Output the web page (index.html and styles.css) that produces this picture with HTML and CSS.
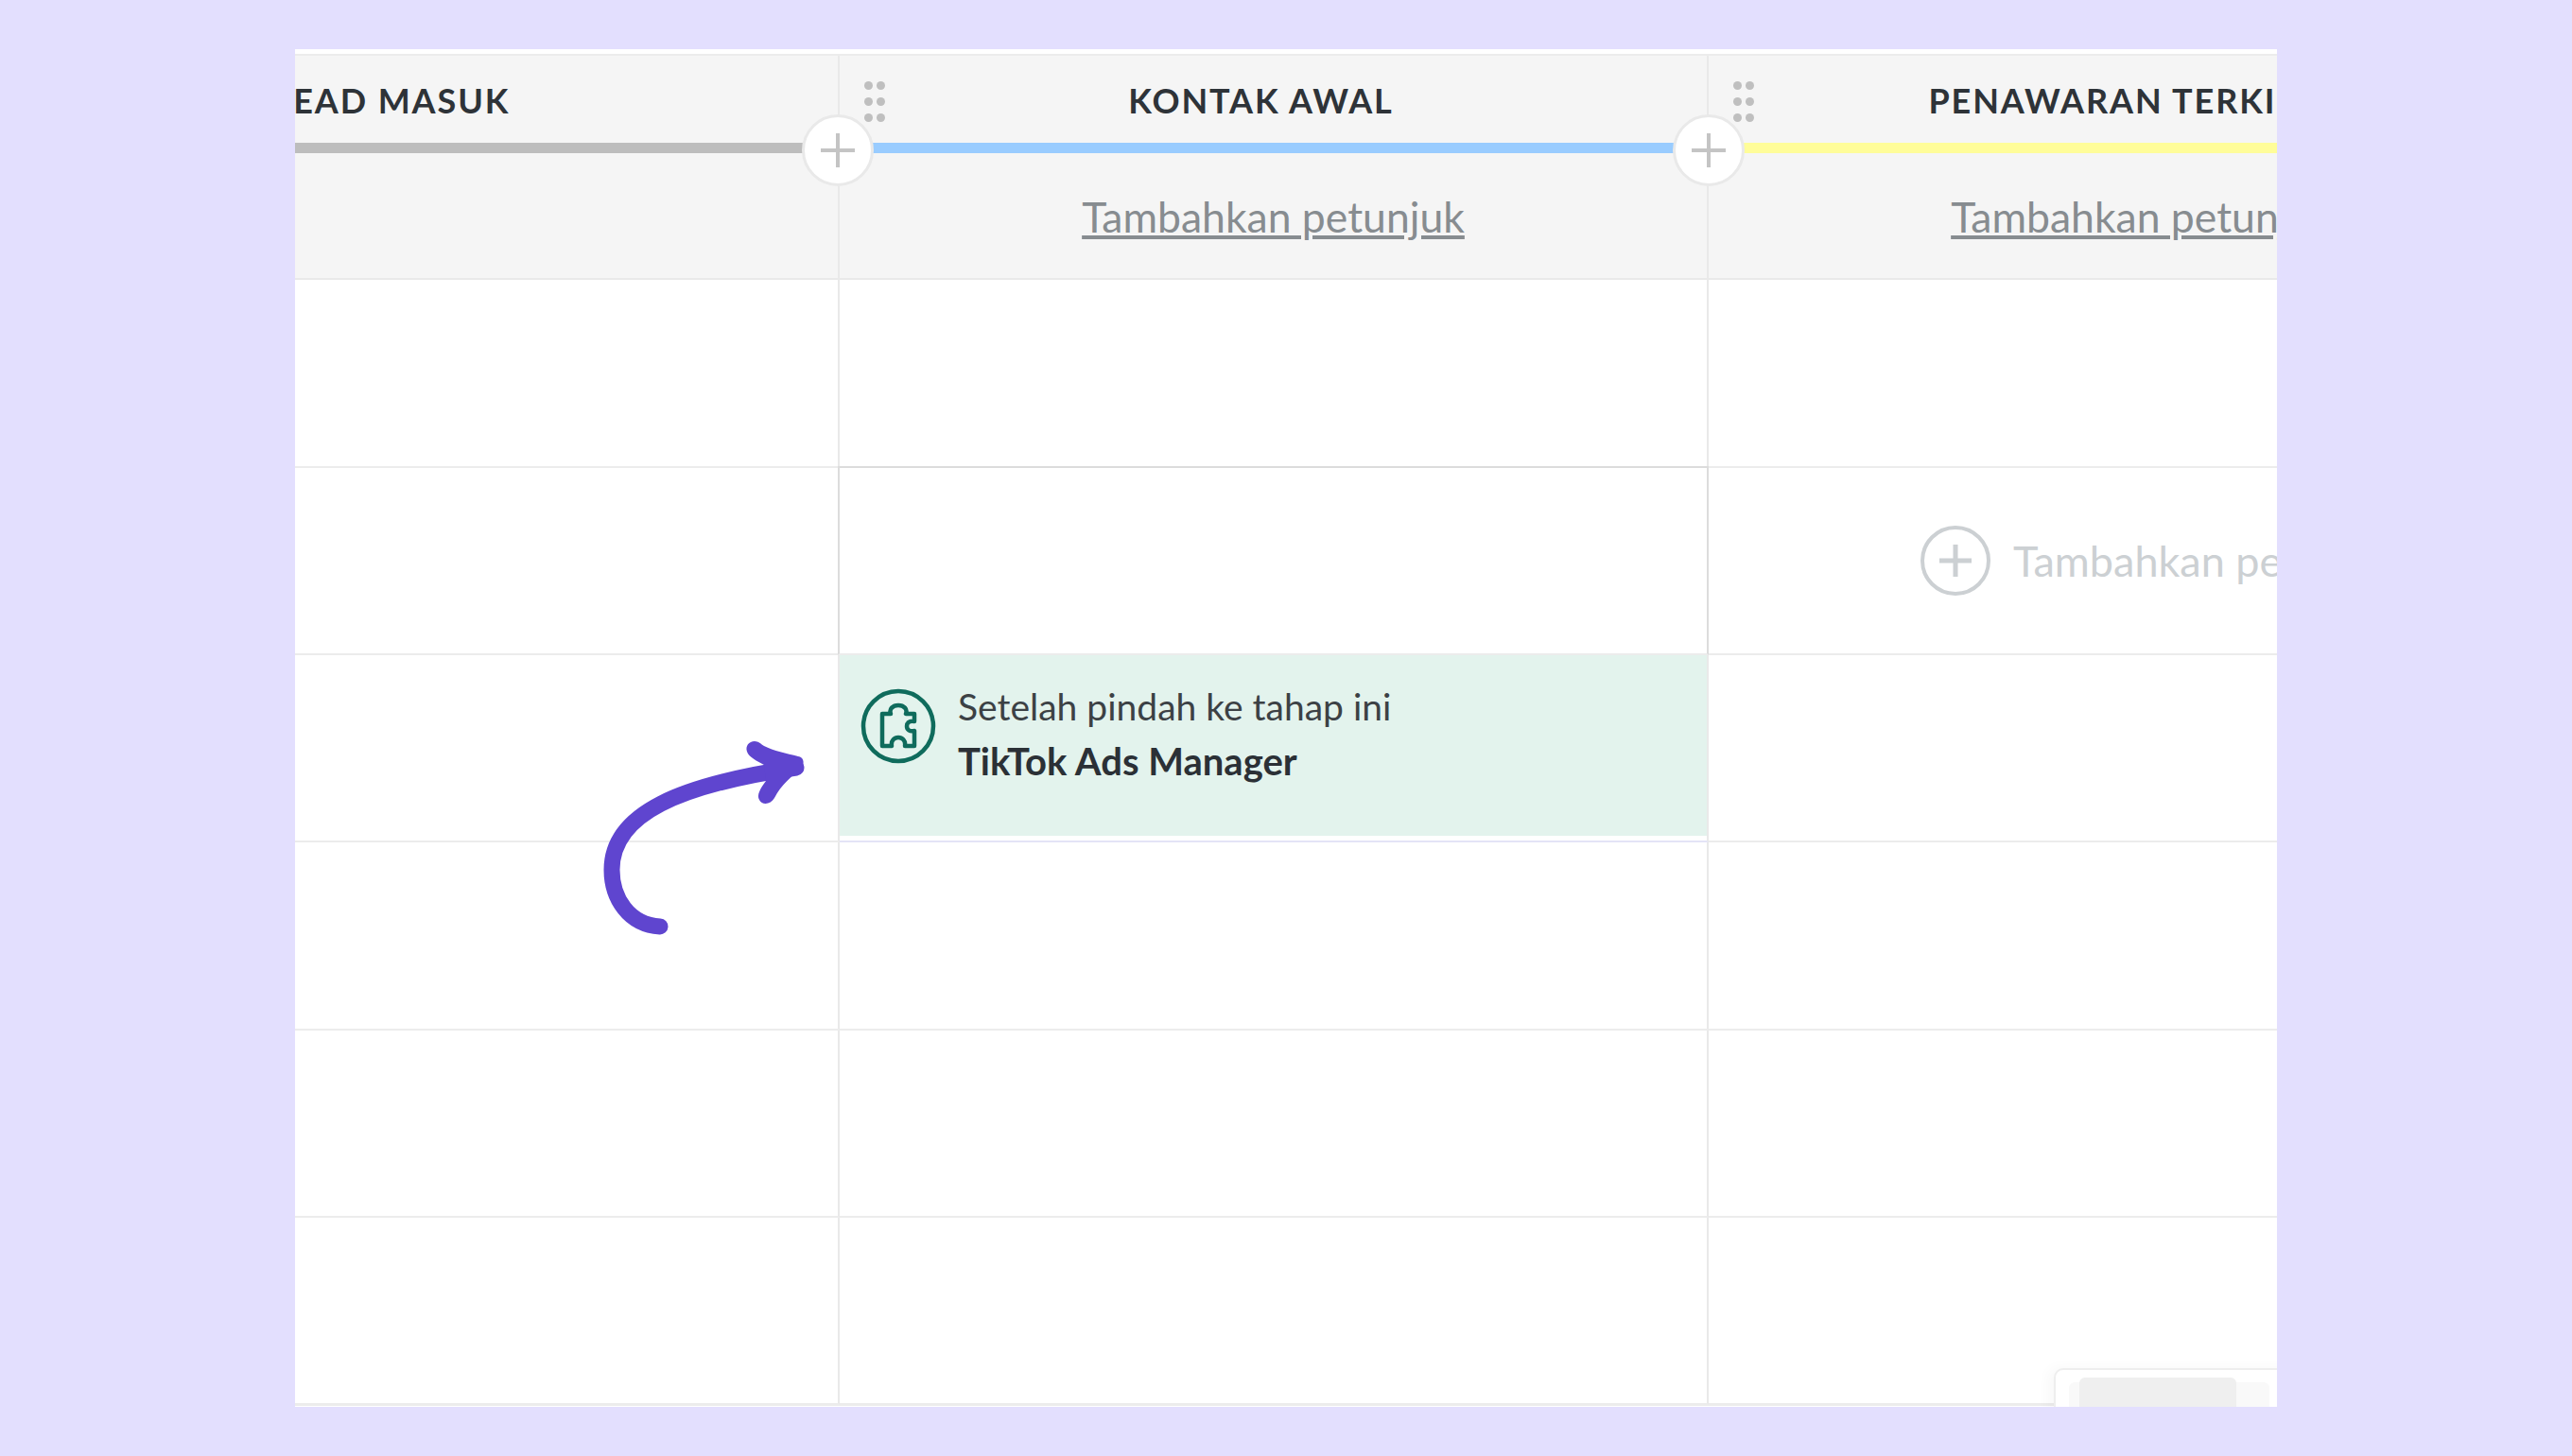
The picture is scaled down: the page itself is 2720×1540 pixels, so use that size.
FILE: index.html
```html
<!DOCTYPE html>
<html lang="id">
<head>
    <meta charset="UTF-8">
    <title>Tahapan</title>
    <link rel="stylesheet" href="styles.css">
</head>
<body>
<div class="board">
    <div class="board-inner">
        <div class="col-head">
            <div class="col-title">LEAD MASUK</div>
            <div class="col-bar bar-gray"></div>
            <div class="col-hint"></div>
            <button class="add-stage"><svg viewBox="0 0 36 36"><path d="M18 0V36M0 18H36"/></svg></button>
        </div>
        <div class="col-head">
            <div class="grip"><i></i><i></i><i></i><i></i><i></i><i></i></div>
            <div class="col-title">KONTAK AWAL</div>
            <div class="col-bar bar-blue"></div>
            <div class="col-hint"><a href="#">Tambahkan petunjuk</a></div>
            <button class="add-stage add-stage-next"><svg viewBox="0 0 36 36"><path d="M18 0V36M0 18H36"/></svg></button>
        </div>
        <div class="col-head">
            <div class="grip"><i></i><i></i><i></i><i></i><i></i><i></i></div>
            <div class="col-title col-title-wide">PENAWARAN TERKINI</div>
            <div class="col-bar bar-yellow"></div>
            <div class="col-hint"><a href="#">Tambahkan petunjuk</a></div>
        </div>

        <div class="cell"></div>
        <div class="cell"></div>
        <div class="cell"></div>

        <div class="cell"></div>
        <div class="cell cell-hover"></div>
        <div class="cell">
            <div class="add-hint">
                <svg class="add-hint-icon" viewBox="0 0 74 74"><circle cx="37" cy="37" r="35"/><path class="add-hint-plus" d="M20 37H54M37 20V54"/></svg>
                <span>Tambahkan petunjuk</span>
            </div>
        </div>

        <div class="cell"></div>
        <div class="cell cell-action">
            <div class="action-card">
                <svg class="action-icon" viewBox="-40 -40 80 80">
                    <circle cx="0" cy="0" r="37"/>
                    <path d="M-17 -13H-8C-10 -18 -6 -22 0 -22C6 -22 10 -18 8 -13H17V-5C11 -6 9 -3 9 0C9 4 12 6 17 5V21H7C8 15 4 12 0 12C-4 12 -8 15 -7 21H-17Z"/>
                </svg>
                <div class="action-text">
                    <div>Setelah pindah ke tahap ini</div>
                    <b>TikTok Ads Manager</b>
                </div>
            </div>
        </div>
        <div class="cell"></div>

        <div class="cell"></div>
        <div class="cell"></div>
        <div class="cell"></div>

        <div class="cell"></div>
        <div class="cell"></div>
        <div class="cell"></div>

        <div class="cell"></div>
        <div class="cell"></div>
        <div class="cell"></div>
    </div>

    <div class="scroll-map">
        <div class="scroll-map-page"></div>
    </div>

    <svg class="arrow" viewBox="0 0 240 230">
        <path class="arrow-line" d="M78 210C45 208 27 180 27 150C27 90 100 60 222 42"/>
        <path class="arrow-head" d="M178 14C182 14 185 17 188 19C198 24 212 27 224 30C230 31 231 37 228 41C218 51 206 60 199 74C195 81 186 82 183 76C180 71 184 64 190 56L188 39C181 35 172 31 170 25C168 19 172 14 178 14Z"/>
    </svg>
</div>
</body>
</html>
```

FILE: styles.css
```css
* {
    box-sizing: border-box;
}
body {
    margin: 0;
    height: 1540px;
    padding: 52px 312px;
    background-color: #e3dffe;
    font-family: "Lato", "Noto Sans", sans-serif;
    color: #2e3338;
    overflow: hidden;
}
.board {
    position: relative;
    height: 1436px;
    padding-top: 5px;
    background-color: #fff;
    overflow: hidden;
}
.board-inner {
    display: grid;
    grid-template-columns: 919px 919px 919px;
    grid-template-rows: 237px 199px repeat(5, 198.2px);
    margin-left: -343px;
    border-top: 2px solid #ececec;
    border-bottom: 2px solid #ececec;
    height: 1430px;
}
.col-head {
    position: relative;
    display: flex;
    flex-direction: column;
    background-color: #f5f5f5;
    border-right: 2px solid #e9e9e9;
    border-bottom: 2px solid #e9e9e9;
}
.col-title {
    height: 92px;
    padding-right: 26px;
    line-height: 94px;
    text-align: center;
    font-size: 36px;
    font-weight: 700;
    letter-spacing: 1.9px;
    white-space: nowrap;
}
.col-title-wide {
    padding-right: 42px;
}
.col-bar {
    height: 11px;
}
.bar-gray { background-color: #bdbdbd; }
.bar-blue { background-color: #99ccff; }
.bar-yellow { background-color: #fffd99; }
.col-hint {
    flex: 1;
    display: flex;
    align-items: center;
    justify-content: center;
    font-size: 44.5px;
}
.col-hint a {
    color: #878c90;
}
.grip {
    position: absolute;
    left: 26px;
    top: 27px;
    display: grid;
    grid-template-columns: 8px 8px;
    gap: 8px 5px;
}
.grip i {
    width: 9px;
    height: 9px;
    border-radius: 50%;
    background-color: #bfbfbf;
}
.add-stage {
    position: absolute;
    right: -38px;
    top: 62px;
    width: 76px;
    height: 76px;
    padding: 0;
    display: flex;
    align-items: center;
    justify-content: center;
    background-color: #fff;
    border: 3px solid #e9e9e9;
    border-radius: 50%;
    z-index: 2;
}
.add-stage-next {
    right: -40px;
}
.add-stage svg {
    width: 36px;
    height: 36px;
    stroke: #c4c4c4;
    stroke-width: 4;
    fill: none;
}
.cell {
    border-right: 2px solid #e9e9e9;
    border-bottom: 2px solid #ececec;
}
.cell-hover {
    border-top: 2px solid #dcdcdc;
    border-left: 2px solid #dcdcdc;
    border-right: 2px solid #dcdcdc;
    margin-top: -2px;
    margin-left: -2px;
}
.cell-action {
    background: #fff;
    border-bottom-color: #e4e4f6;
}
.action-card {
    display: flex;
    height: 191px;
    padding: 35px 0 0 22px;
    gap: 23px;
    background-color: #e3f3ed;
}
.action-icon {
    width: 80px;
    height: 80px;
    flex: none;
    fill: none;
    stroke: #0f6b5c;
    stroke-linejoin: round;
    stroke-width: 4.5;
}
.action-text {
    font-size: 39px;
    line-height: 58px;
    margin-top: -10px;
    color: #3c4145;
}
.action-text b {
    font-size: 40px;
    color: #2b3036;
}
.add-hint {
    display: flex;
    align-items: center;
    gap: 24px;
    height: 100%;
    padding-left: 224px;
    font-size: 45px;
    color: #ccd0d3;
    white-space: nowrap;
}
.add-hint-icon {
    width: 74px;
    height: 74px;
    flex: none;
    fill: none;
    stroke: #ccd0d3;
    stroke-width: 4;
}
.add-hint-plus {
    stroke-width: 5;
}
.scroll-map {
    position: absolute;
    left: 1860px;
    top: 1395px;
    width: 260px;
    height: 60px;
    padding: 8px 0 0 25px;
    background-color: #fff;
    border: 2px solid #eeeeee;
    border-radius: 10px 0 0 0;
    box-shadow: -6px 0 14px rgba(0, 0, 0, 0.03);
}
.scroll-map::before {
    content: "";
    position: absolute;
    left: 14px;
    top: 13px;
    width: 212px;
    height: 40px;
    background-color: #f9f9f9;
    border-radius: 6px;
}
.scroll-map-page {
    position: relative;
    width: 166px;
    height: 50px;
    background-color: #efefef;
    border-radius: 6px;
}
.arrow {
    position: absolute;
    left: 308px;
    top: 718px;
    width: 240px;
    height: 230px;
}
.arrow-line {
    fill: none;
    stroke: #5f45cf;
    stroke-width: 17;
    stroke-linecap: round;
}
.arrow-head {
    fill: #5f45cf;
}
```
